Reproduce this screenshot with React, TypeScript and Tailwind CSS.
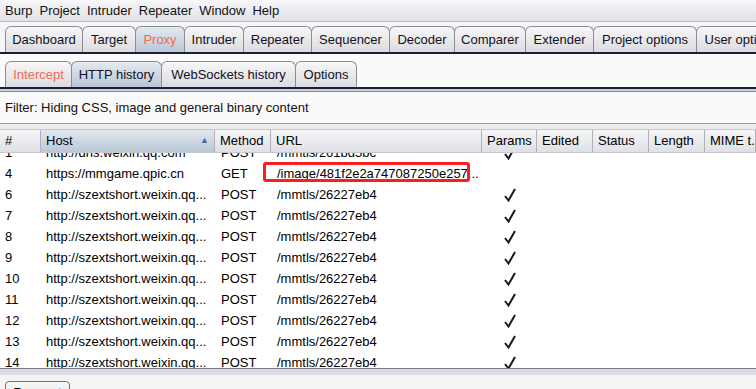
import React from "react";

const mainTabs = [
  { label: "Dashboard", w: "w-[78px]" },
  { label: "Target", w: "w-[54px]" },
  { label: "Proxy", w: "w-[50px]", active: true, hot: true },
  { label: "Intruder", w: "w-[60px]" },
  { label: "Repeater", w: "w-[69px]" },
  { label: "Sequencer", w: "w-[79px]" },
  { label: "Decoder", w: "w-[66px]" },
  { label: "Comparer", w: "w-[72px]" },
  { label: "Extender", w: "w-[69px]" },
  { label: "Project options", w: "w-[104px]" },
  { label: "User options", w: "w-[90px]" },
];

const subTabs = [
  { label: "Intercept", w: "w-[67px]", hot: true },
  { label: "HTTP history", w: "w-[91px]", active: true },
  { label: "WebSockets history", w: "w-[135px]" },
  { label: "Options", w: "w-[62px]" },
];

const columns = [
  { label: "#", w: "w-[41px]" },
  { label: "Host", w: "w-[174px]", sorted: true },
  { label: "Method", w: "w-[56px]" },
  { label: "URL", w: "w-[211px]" },
  { label: "Params", w: "w-[55px]" },
  { label: "Edited", w: "w-[56px]" },
  { label: "Status", w: "w-[56px]" },
  { label: "Length", w: "w-[56px]" },
  { label: "MIME t...", w: "flex-1" },
];

const rows = [
  { n: "1", host: "http://dns.weixin.qq.com", method: "POST", url: "/mmtls/261bd5bc", params: true },
  { n: "4", host: "https://mmgame.qpic.cn", method: "GET", url: "/image/481f2e2a747087250e257...", params: false },
  ...["6", "7", "8", "9", "10", "11", "12", "13", "14"].map((n) => ({
    n,
    host: "http://szextshort.weixin.qq...",
    method: "POST",
    url: "/mmtls/26227eb4",
    params: true,
  })),
];

const Tab = ({ label, w, active, hot }: { label: string; w: string; active?: boolean; hot?: boolean }) => (
  <div
    className={`${w} shrink-0 h-[26px] flex items-center justify-center whitespace-nowrap overflow-hidden border border-b-0 border-[#8c8c94] rounded-t-[6px] -mr-px ${
      active ? "bg-gradient-to-b from-[#e4eaf1] to-[#b7c7d7]" : "bg-gradient-to-b from-[#f7f7f8] to-[#dcdce0]"
    } ${hot ? "text-[#f4684c]" : "text-[#111122]"}`}
  >
    {label}
  </div>
);

const Check = () => (
  <svg width="12" height="14" viewBox="0 0 12 14">
    <path d="M1 8 L4.5 12.5 L11 1" fill="none" stroke="#1a1a1a" strokeWidth="2" />
  </svg>
);

export default function App() {
  return (
    <div
      className="w-[756px] h-[389px] overflow-hidden flex flex-col bg-[#f4f4f4] text-[13px] text-black"
      style={{ fontFamily: '"Liberation Sans", Arial, sans-serif' }}
    >
      {/* menu bar */}
      <div className="h-[22px] shrink-0 flex items-center gap-[7px] px-[5px] bg-gradient-to-b from-[#f8f8fa] to-[#e0e1e7] border-b border-[#b8b8c0] text-[#111]">
        {["Burp", "Project", "Intruder", "Repeater", "Window", "Help"].map((m) => (
          <span key={m}>{m}</span>
        ))}
      </div>

      {/* main tabs */}
      <div className="h-[30px] shrink-0 flex items-end pl-[5px] bg-[#f6f6f7] overflow-hidden">
        {mainTabs.map((t) => (
          <Tab key={t.label} {...t} />
        ))}
      </div>
      <div className="h-[2px] shrink-0 bg-[#1c1c34]" />

      {/* sub tabs */}
      <div className="h-[33px] shrink-0 flex items-end pl-[5px] bg-[#fafafa]">
        {subTabs.map((t) => (
          <Tab key={t.label} {...t} />
        ))}
      </div>
      <div className="h-[2px] shrink-0 bg-[#1c1c34]" />
      <div className="h-[2px] shrink-0 bg-[#c5d1de]" />
      <div className="h-px shrink-0 bg-[#8a8a90]" />

      {/* filter */}
      <div className="h-[32px] shrink-0 flex items-center px-[5px] bg-[#fafafa] border-b border-[#9c9ca0] text-[#111]">
        Filter: Hiding CSS, image and general binary content
      </div>
      <div className="h-[5px] shrink-0 bg-[#ececec]" />

      {/* header */}
      <div className="h-[24px] shrink-0 flex bg-gradient-to-b from-[#f6f6f8] to-[#dfe0e5] border-t border-[#c8c8cc] border-b border-[#a8a8b0]">
        {columns.map((c) => (
          <div
            key={c.label}
            className={`${c.w} shrink-0 h-full flex items-center justify-between px-[5px] border-r border-[#b0b0b8] whitespace-nowrap overflow-hidden ${
              c.sorted ? "bg-gradient-to-b from-[#e2e8ef] to-[#b9c8d7]" : ""
            }`}
          >
            <span>{c.label}</span>
            {c.sorted && <span className="text-[9px] text-[#4a6a96]">▲</span>}
          </div>
        ))}
      </div>

      {/* rows */}
      <div className="relative h-[215px] shrink-0 overflow-hidden bg-white">
        <div className="-mt-[11px]">
          {rows.map((r) => (
            <div key={r.n} className="h-[21px] flex items-center whitespace-nowrap">
              <div className="w-[41px] pl-[5px]">{r.n}</div>
              <div className="w-[174px] pl-[5px] overflow-hidden">{r.host}</div>
              <div className="w-[56px] pl-[6px]">{r.method}</div>
              <div className="w-[211px] pl-[6px] overflow-hidden">{r.url}</div>
              <div className="w-[55px] flex justify-center pl-[1px]">{r.params && <Check />}</div>
            </div>
          ))}
        </div>
        <div className="absolute left-[263px] top-[9px] w-[207px] h-[20px] border-[3px] border-[#fb1e1e] rounded-[3px]" />
      </div>

      {/* bottom */}
      <div className="h-px shrink-0 bg-[#7c7c84]" />
      <div className="h-[6px] shrink-0 bg-[#d9dbe4]" />
      <div className="flex-1 bg-[#f4f4f4] pt-[6px] pl-[5px]">
        <div className="w-[65px] h-[24px] flex items-center justify-center border border-[#707078] rounded-[4px] bg-gradient-to-b from-[#f8f8f8] to-[#dcdce0]">
          Request
        </div>
      </div>
    </div>
  );
}
